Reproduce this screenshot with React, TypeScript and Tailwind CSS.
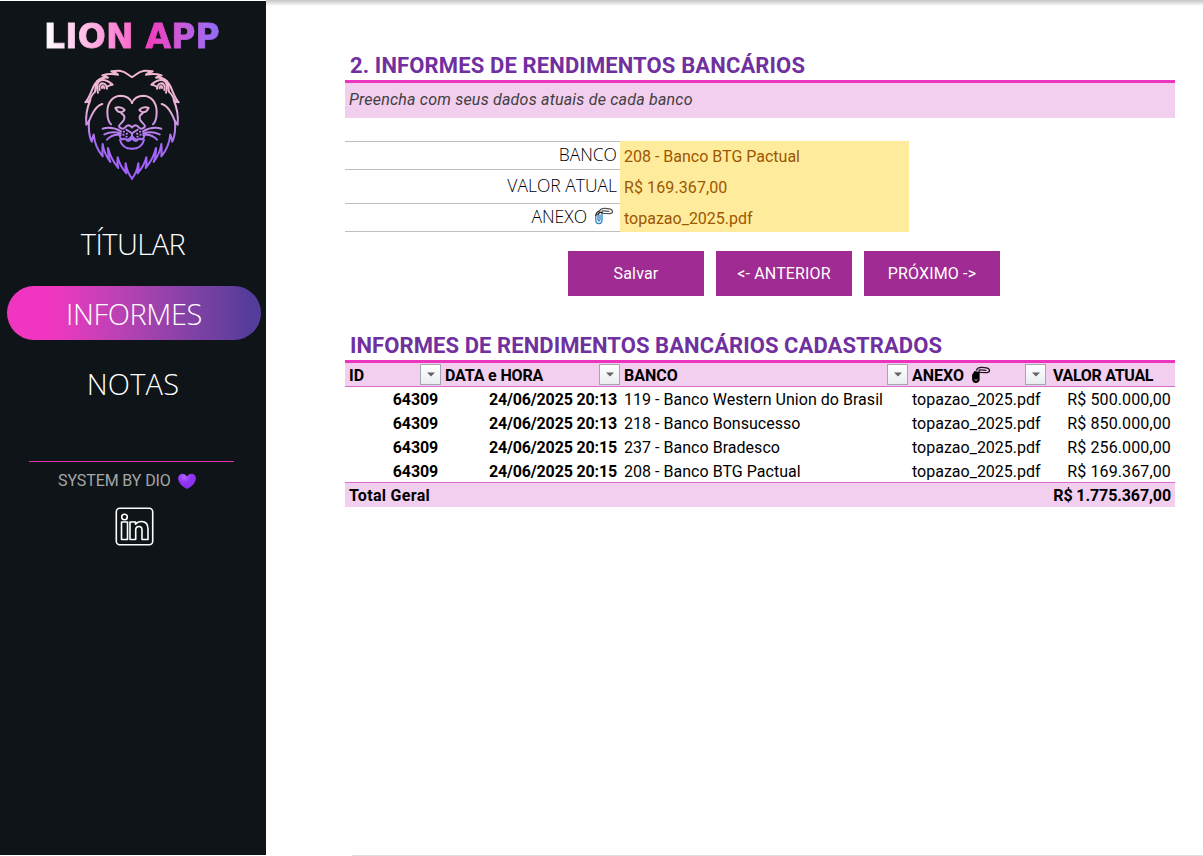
import React from "react";

const sans = "font-['Roboto','Liberation_Sans',sans-serif]";
const light = "font-['Open_Sans','Noto_Sans',sans-serif] font-light";

const maneHalf =
  "M180 45 C170 41 162 29 146 27 C137 25 127 28 118 28 C124 32 132 31 138 38 C120 35 106 35 91 40 C97 42 103 42 108 47 C84 44 68 62 60 84 C54 98 50 110 40 121 C46 121 51 118 55 114 C45 138 40 160 43 188 C46 185 49 181 51 177 C49 202 51 221 59 239 C61 231 62 224 65 218 C68 244 76 265 92 283 C91 272 90 261 92 246 C95 270 103 284 115 300 C110 288 108 276 108 258 C113 278 124 300 139 318 C136 308 135 299 137 286 C141 302 149 318 163 334 C160 324 159 314 161 304 C164 324 171 338 180 350";

function LionHalf() {
  return (
    <g>
      <path d={maneHalf} />
      <path d="M78 92 C72 70 76 56 90 54 C104 52 112 60 122 68 C115 68 109 71 104 75" />
      <path d="M83 84 C79 68 88 62 96 65 C102 67 104 72 105 80 M90 78 C89 70 96 70 97 79" />
      <path d="M76 57 C70 70 70 82 69 90 C62 94 58 102 53 114" />
      <path d="M91 126 C72 130 58 158 48 186" />
      <path d="M180 123 C174 107 160 101 145 101 C122 102 106 122 106 150 C106 168 109 180 117 187" />
      <path d="M130 138 C138 134 151 135 158 144 C154 150 145 152 138 148 C134 145 133 142 130 138 Z" />
      <path d="M148 154 C161 160 159 172 151 180 C143 188 134 194 150 200 C159 203 159 191 169 190 C174 190 177 193 180 196" />
      <path d="M163 203 C168 207 174 208 180 215 L180 222 C174 232 164 236 155 230 C149 235 145 228 143 222" />
      <path d="M144 233 C148 251 160 260 180 260 M165 235 C169 238 173 238 180 229" />
      <path d="M92 200 C110 195 130 198 147 208 M97 217 C111 210 130 209 146 214 M105 233 C116 221 132 217 146 219" />
      <path d="M155 209 L156 209 M164 215 L165 215 M154 218 L155 218 M163 224 L164 224" />
    </g>
  );
}

function Lion() {
  return (
    <svg viewBox="0 0 360 372" className="mx-auto h-[124px] w-[120px]" fill="none" stroke="url(#lion)" strokeWidth="6" strokeLinecap="round" strokeLinejoin="round">
      <defs>
        <linearGradient id="lion" gradientUnits="userSpaceOnUse" x1="0" y1="24" x2="0" y2="352">
          <stop offset="0" stopColor="#f4b8d0" />
          <stop offset="0.35" stopColor="#e9b3d7" />
          <stop offset="0.65" stopColor="#a56bf5" />
          <stop offset="1" stopColor="#a25cff" />
        </linearGradient>
      </defs>
      <LionHalf />
      <g transform="translate(360 0) scale(-1 1)"><LionHalf /></g>
    </svg>
  );
}

function Heart() {
  return (
    <svg viewBox="0 0 20 18" className="h-[17px] w-[20px]">
      <defs>
        <radialGradient id="heart" cx="0.35" cy="0.2" r="0.8">
          <stop offset="0" stopColor="#b660ff" />
          <stop offset="0.5" stopColor="#8f35f2" />
          <stop offset="1" stopColor="#8a2cf0" />
        </radialGradient>
      </defs>
      <path d="M10 17 C5 14 .6 10.500 .6 5.500 C.6 2.500 2.800 .8 5.200 .8 C7.400 .8 9 1.900 10 3.800 C11 1.900 12.600 .8 14.800 .8 C17.200 .8 19.400 2.500 19.400 5.500 C19.400 10.500 15 14 10 17Z" fill="url(#heart)" />
    </svg>
  );
}

function LinkedIn() {
  return (
    <svg viewBox="0 0 39 39" className="h-[39px] w-[39px]" fill="none" stroke="#fff" strokeWidth="1.6" strokeLinejoin="round">
      <rect x="1.300" y="1.300" width="36.400" height="36.400" rx="3.500" />
      <circle cx="9.500" cy="10" r="2.800" />
      <path d="M6.500 15 H12.500 V32.500 H6.500 Z" />
      <path d="M15 15 H20.500 V17.300 C22 15.300 24 14.500 26.500 14.500 C31 14.500 33 17.500 33 22 V32.500 H27 V23 C27 20.700 26 19.500 24 19.500 C22 19.500 20.700 20.800 20.700 23 V32.500 H15 Z" />
    </svg>
  );
}

function Clips({ dark = false }: { dark?: boolean }) {
  return (
    <svg viewBox="0 0 20 18" className="h-[18px] w-[20px]" fill="none" strokeLinecap="round">
      <path d="M5.500 4 C6.500 1.600 8.500 1.200 11 1.300 L15.500 1.800 C19.500 2.500 19.500 6.800 15.500 6.700 L9.500 6.400 C7.500 6 7.500 3.600 9.500 3.800 L15 4.300" stroke={dark ? "#1c1218" : "#555"} strokeWidth="1.300" />
      {dark ? (
        <>
          <path d="M1 9 L3.500 5 L8.600 6 L8.600 14 C8 18 1.600 18 1.200 14Z" fill="#000" />
          <path d="M3.800 13.500 C4 15 6 15 6.200 13.500" stroke="#c9a8c6" strokeWidth=".9" />
        </>
      ) : (
        <>
          <path d="M1.800 8.500 V13 C1.800 17.800 8 17.800 8 13 V7 M4 7.500 V12.500 C4 14.500 6 14.500 6 12.500 V8" stroke="#2f83c4" strokeWidth="1.300" />
          <path d="M1.800 8.500 C2.200 6 3.500 4.500 5.200 4 M4 7.500 C4.600 5.800 6.500 4.800 8 6" stroke="#222" strokeWidth="1.300" />
        </>
      )}
    </svg>
  );
}

function Filter() {
  return (
    <span className="mt-px flex h-[21px] w-[21px] items-center justify-center border border-[#a3a7ae] bg-linear-to-b from-white to-[#eaedf0]">
      <svg viewBox="0 0 8 5" className="h-[5px] w-[8px]"><path d="M0 .5 H8 L4 4.500Z" fill="#5f6368" /></svg>
    </span>
  );
}

const rows = [
  ["24/06/2025 20:13", "119 - Banco Western Union do Brasil", "R$ 500.000,00"],
  ["24/06/2025 20:13", "218 - Banco Bonsucesso", "R$ 850.000,00"],
  ["24/06/2025 20:15", "237 - Banco Bradesco", "R$ 256.000,00"],
  ["24/06/2025 20:15", "208 - Banco BTG Pactual", "R$ 169.367,00"],
];

const grid = "grid grid-cols-[96px_179px_288px_141px_126px]";

export default function App() {
  return (
    <div className={`flex h-[856px] w-[1203px] overflow-hidden bg-white ${sans}`}>
      <aside className="mt-px flex h-[854px] w-[266px] shrink-0 flex-col bg-[#0e1418]">
        <h1 className="mt-[16px] ml-[44px] h-[40px] w-[178px] bg-linear-to-r from-white via-[#f03cc0] via-60% to-[#8b6cf8] bg-clip-text font-['DejaVu_Sans'] text-[33px] leading-[40px] font-bold tracking-[0.2px] whitespace-nowrap text-transparent [-webkit-text-stroke:0.8px_transparent]">
          LION APP
        </h1>
        <div className="mt-[5px] w-[264px]"><Lion /></div>
        <nav className={`mt-[31px] flex flex-col items-center text-[29px] leading-[54px] text-white ${light}`}>
          <a className="h-[54px] tracking-[-0.5px]">TÍTULAR</a>
          <a className="mt-[15px] ml-[2px] h-[54px] w-[254px] rounded-full bg-linear-to-r from-[#f036c0] from-18% to-[#553c9a] to-95% text-center leading-[56px] tracking-[-0.4px]">INFORMES</a>
          <a className="mt-[17px] h-[54px] tracking-[0.2px]">NOTAS</a>
        </nav>
        <div className="mt-[50px] ml-[29px] h-px w-[205px] bg-[#e62fb4]" />
        <div className="mt-[9px] ml-[58px] flex h-[20px] items-center gap-[6px] text-[16px] tracking-[-0.1px] whitespace-nowrap text-[#a6a6a6]">
          <span>SYSTEM BY DIO</span><Heart />
        </div>
        <div className="mt-[16px] ml-[115px]"><LinkedIn /></div>
      </aside>

      <main className="relative flex-1 pl-[79px]">
        <div className="absolute top-0 left-0 h-[6px] w-full bg-linear-to-b from-[#c4c4c4] to-white" />
        <div className="w-[830px]">
          <h2 className="mt-[49px] h-[31px] pl-[5px] text-[22px] leading-[34px] font-bold tracking-[0.13px] whitespace-nowrap text-[#7030a0]">
            2. INFORMES DE RENDIMENTOS BANCÁRIOS
          </h2>
          <div className="h-[38px] border-t-[3px] border-[#ec34bc] bg-[#f2ceef] pl-[4px] text-[16px] leading-[34px] tracking-[0.21px] text-[#404040] italic">
            Preencha com seus dados atuais de cada banco
          </div>

          <div className="mt-[23px] flex h-[91px] w-[564px]">
            <div className={`w-[276px] text-right text-[17.5px] text-black ${light}`}>
              <div className="h-[28px] border-t border-[#bfbfbf] pr-[4px] leading-[25px]">BANCO</div>
              <div className="h-[34px] border-t border-[#bfbfbf] pr-[4px] leading-[31px]">VALOR ATUAL</div>
              <div className="flex h-[29px] justify-end gap-[7px] border-y border-[#bfbfbf] pr-[7px] leading-[25px]">
                <span>ANEXO</span><span className="mt-[3px]"><Clips /></span>
              </div>
            </div>
            <div className="-ml-px flex-1 bg-[#ffeb9c] pl-[4px] text-[16px] leading-[31px] text-[#9c5700]">
              <div className="h-[31px]">208 - Banco BTG Pactual</div>
              <div className="h-[31px] tracking-[0.1px]">R$ 169.367,00</div>
              <div className="h-[29px]">topazao_2025.pdf</div>
            </div>
          </div>

          <div className="mt-[19px] ml-[223px] flex gap-[12px] text-[16px] tracking-[0.15px] text-white">
            <button className="h-[45px] w-[136px] bg-[#a02b93]">Salvar</button>
            <button className="h-[45px] w-[136px] bg-[#a02b93]">&lt;- ANTERIOR</button>
            <button className="h-[45px] w-[136px] bg-[#a02b93]">PRÓXIMO -&gt;</button>
          </div>

          <h2 className="mt-[33px] h-[31px] pl-[5px] text-[22px] leading-[34px] font-bold tracking-[0.08px] whitespace-nowrap text-[#7030a0]">
            INFORMES DE RENDIMENTOS BANCÁRIOS CADASTRADOS
          </h2>
          <div className="border-t-[3px] border-[#ec34bc] text-[16px] leading-[24px] whitespace-nowrap text-black">
            <div className={`${grid} h-[24px] border-b border-[#d86dcd] bg-[#f2ceef] leading-[26px] font-bold`}>
              <div className="flex justify-between pl-[4px]"><span>ID</span><Filter /></div>
              <div className="flex justify-between pl-[4px] tracking-[-0.15px]"><span>DATA e HORA</span><Filter /></div>
              <div className="flex justify-between pl-[4px]"><span>BANCO</span><Filter /></div>
              <div className="flex pr-[3px] pl-[4px]"><span>ANEXO</span><span className="mt-[3px] ml-[7px]"><Clips dark /></span><span className="ml-auto"><Filter /></span></div>
              <div className="pl-[4px] tracking-[-0.3px]">VALOR ATUAL</div>
            </div>
            {rows.map(([date, bank, value]) => (
              <div key={bank} className={`${grid} h-[24px] leading-[26px]`}>
                <div className="pr-[3px] text-right font-bold tracking-[-0.15px]">64309</div>
                <div className="pr-[3px] text-right font-bold tracking-[-0.15px]">{date}</div>
                <div className="pl-[4px] tracking-[0.03px]">{bank}</div>
                <div className="pl-[4px]">topazao_2025.pdf</div>
                <div className="pr-[4px] text-right tracking-[0.13px]">{value}</div>
              </div>
            ))}
            <div className="-mt-px flex h-[25px] justify-between border-t border-[#d86dcd] bg-[#f2ceef] px-[4px] leading-[25px] font-bold">
              <span className="tracking-[0.3px]">Total Geral</span><span className="tracking-[-0.1px]">R$ 1.775.367,00</span>
            </div>
          </div>
        </div>
        <div className="absolute right-0 bottom-0 h-px w-[851px] bg-[#e0e0e0]" />
      </main>
    </div>
  );
}
